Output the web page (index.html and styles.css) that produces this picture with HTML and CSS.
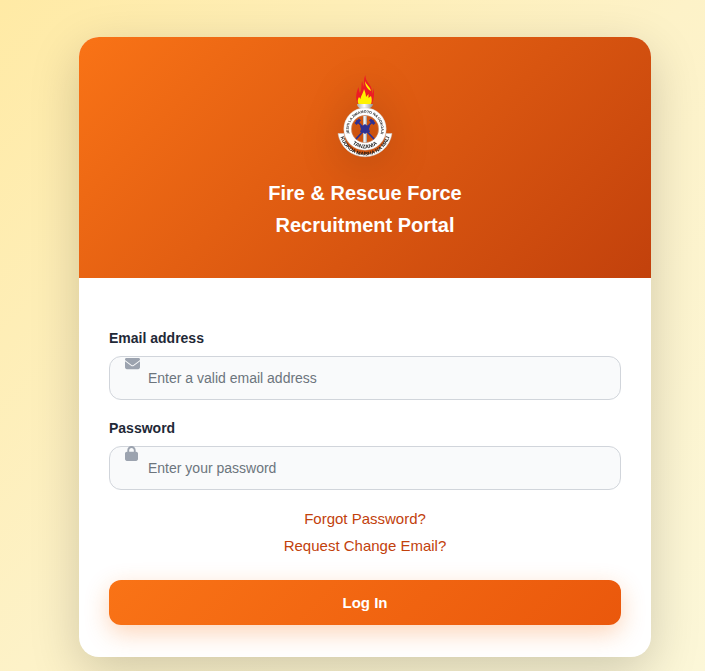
FILE: index.html
```html
<!DOCTYPE html>
<html lang="en">
<head>
<meta charset="utf-8">
<meta name="viewport" content="width=device-width, initial-scale=1">
<title>Fire &amp; Rescue Force Recruitment Portal</title>
<link rel="stylesheet" href="styles.css">
</head>
<body>
<main class="card">
  <header class="card-header">
    <svg class="logo" viewBox="0 0 90 90" role="img" aria-label="Fire and Rescue Force emblem">
      <defs>
        <linearGradient id="metal">
          <stop offset="0" stop-color="#a9a9a9"/>
          <stop offset=".45" stop-color="#ffffff"/>
          <stop offset="1" stop-color="#929292"/>
        </linearGradient>
        <path id="top-arc" d="M32.600 67.500A16.200 16.200 0 1 1 57.400 67.500"/>
        <path id="low-arc" d="M25.700 57A19.300 19.300 0 0 0 64.300 57"/>
        <path id="ribbon-arc" d="M19.600 58A25.400 25.400 0 0 0 70.400 58"/>
      </defs>
      <path fill="#ed1c24" d="M38 32C35 27 36 21 38.500 15C39 18 39 20 40 21C42 17 41 13 42 9C43 11 43 13 43 15C45 12 43 7 45.500 3C45 8 49 11 51 15C52 18 52 20 52 22C53 20 53.500 18 53 16C55 20 54 27 52 32Z"/>
      <path fill="#fff200" d="M38.500 32C37 29 38 27 39 25L40.500 27C41 23 43 22 44 17C45 20 46 22 46 25L48.500 22L48.500 26L51 24C52 27 52 29 51 32ZM45 9C46 13 50 14 51 19C47 17 45 13 45 9Z"/>
      <path fill="url(#metal)" d="M37 32H53C53 35 49 36.500 47.500 37.500V43H42.500V37.500C40 36.500 37 35 37 32Z"/>
      <path fill="#fff" stroke="#c9c9c9" stroke-width=".5" d="M18 61.500H24A21 21 0 0 0 66 61.500H72A27.300 27.300 0 0 1 18 61.500Z"/>
      <circle cx="45" cy="57" r="17.500" fill="none" stroke="#fff" stroke-width="7.500"/>
      <circle cx="45" cy="57" r="21.200" fill="none" stroke="#c4bdb8" stroke-width=".4"/>
      <circle cx="45" cy="57" r="13.700" fill="none" stroke="#c4bdb8" stroke-width=".4"/>
      <path fill="url(#metal)" d="M43 44H47V70.500H43Z"/>
      <g stroke="#2e3192" fill="none">
        <path stroke-width="1.800" stroke-linecap="round" d="M37 49L53.500 66.500M53 49L36.500 66.500"/>
        <path stroke-width="3" d="M35.500 52L40 47.500M50 47.500L54.500 52"/>
      </g>
      <path fill="#2e3192" d="M45 52L47 53.500L50 54L49 57L50 60L47 60.500L45 62L43 60.500L40 60L41 57L40 54L43 53.500Z"/>
      <g font-family="Liberation Sans, sans-serif" font-weight="700" fill="#191919" text-anchor="middle">
        <text font-size="3.600"><textPath href="#top-arc" startOffset="50%">JESHI LA ZIMAMOTO NA UOKOAJI</textPath></text>
        <text font-size="5.300"><textPath href="#low-arc" startOffset="50%">TANZANIA</textPath></text>
        <text font-size="5"><textPath href="#ribbon-arc" startOffset="50%">KUOKOA MAISHA NA MALI</textPath></text>
      </g>
    </svg>
    <h1 class="title">Fire &amp; Rescue Force<br>Recruitment Portal</h1>
  </header>
  <form class="form">
    <label class="label" for="email">Email address</label>
    <div class="field">
      <svg class="icon" viewBox="0 0 512 512" aria-hidden="true"><path d="M48 64C21.500 64 0 85.500 0 112c0 15.100 7.100 29.300 19.200 38.400L236.800 313.600c11.400 8.500 27 8.500 38.400 0L492.800 150.400c12.100-9.100 19.200-23.300 19.200-38.400 0-26.500-21.500-48-48-48H48zM0 176V384c0 35.300 28.700 64 64 64H448c35.300 0 64-28.700 64-64V176L294.400 339.200c-22.800 17.100-54 17.100-76.800 0L0 176z"/></svg>
      <input class="input" id="email" type="email" placeholder="Enter a valid email address">
    </div>
    <label class="label" for="password">Password</label>
    <div class="field">
      <svg class="icon icon-lock" viewBox="0 0 448 512" aria-hidden="true"><path d="M144 144v48H304V144c0-44.200-35.800-80-80-80s-80 35.800-80 80zM80 192V144C80 64.500 144.500 0 224 0s144 64.500 144 144v48h16c35.300 0 64 28.700 64 64V448c0 35.300-28.700 64-64 64H64c-35.300 0-64-28.700-64-64V256c0-35.300 28.700-64 64-64H80z"/></svg>
      <input class="input" id="password" type="password" placeholder="Enter your password">
    </div>
    <nav class="links">
      <a href="#">Forgot Password?</a>
      <a href="#">Request Change Email?</a>
    </nav>
    <button class="submit" type="submit">Log In</button>
  </form>
</main>
</body>
</html>
```
FILE: styles.css
```css
* {
  box-sizing: border-box;
}

body {
  margin: 0;
  min-height: 100vh;
  padding: 37px 54px 14px 79px;
  background: linear-gradient(135deg, #ffeaa5, #fdf2c8 50%, #fcf7d8);
  font-family: "Liberation Sans", Arial, sans-serif;
  color: #1f2937;
}

.card {
  overflow: hidden;
  border-radius: 20px;
  background: #fff;
  box-shadow: 0 15px 50px rgba(0, 0, 0, 0.18);
}

.card-header {
  display: flex;
  flex-direction: column;
  align-items: center;
  gap: 15px;
  padding: 35px 30px 37px;
  background: linear-gradient(135deg, #f97316, #c2410c);
  color: #fff;
  text-align: center;
}

.logo {
  width: 90px;
  height: 90px;
  filter: drop-shadow(0 8px 20px rgba(0, 0, 0, 0.2));
}

.title {
  margin: 0;
  font-size: 20px;
  line-height: 32px;
}

.form {
  display: flex;
  flex-direction: column;
  padding: 47px 30px 32px;
}

.label {
  margin-bottom: 5px;
  font-size: 14px;
  line-height: 26px;
  font-weight: 700;
}

.field {
  position: relative;
  margin-bottom: 15px;
}

.icon {
  position: absolute;
  top: 0;
  left: 16px;
  width: 15px;
  height: 15px;
  fill: #9ca3af;
}

.icon-lock {
  width: 13px;
}

.input {
  display: block;
  width: 100%;
  height: 44px;
  padding: 0 16px 0 38px;
  border: 1px solid #d1d5db;
  border-radius: 12px;
  background: #f9fafb;
  font: 14px/20px "Liberation Sans", Arial, sans-serif;
  color: #1f2937;
}

.input::placeholder {
  color: #6c757d;
  opacity: 1;
}

.links {
  display: flex;
  flex-direction: column;
  align-items: center;
  margin-bottom: 21px;
  font-size: 15px;
  line-height: 27px;
}

.links a {
  color: #c2410c;
  text-decoration: none;
}

.submit {
  height: 45px;
  border: 0;
  border-radius: 12px;
  background: linear-gradient(135deg, #f97316, #ea580c);
  box-shadow: 0 8px 25px rgba(249, 115, 22, 0.3);
  font: 700 15px/24px "Liberation Sans", Arial, sans-serif;
  color: #fff;
}
```
